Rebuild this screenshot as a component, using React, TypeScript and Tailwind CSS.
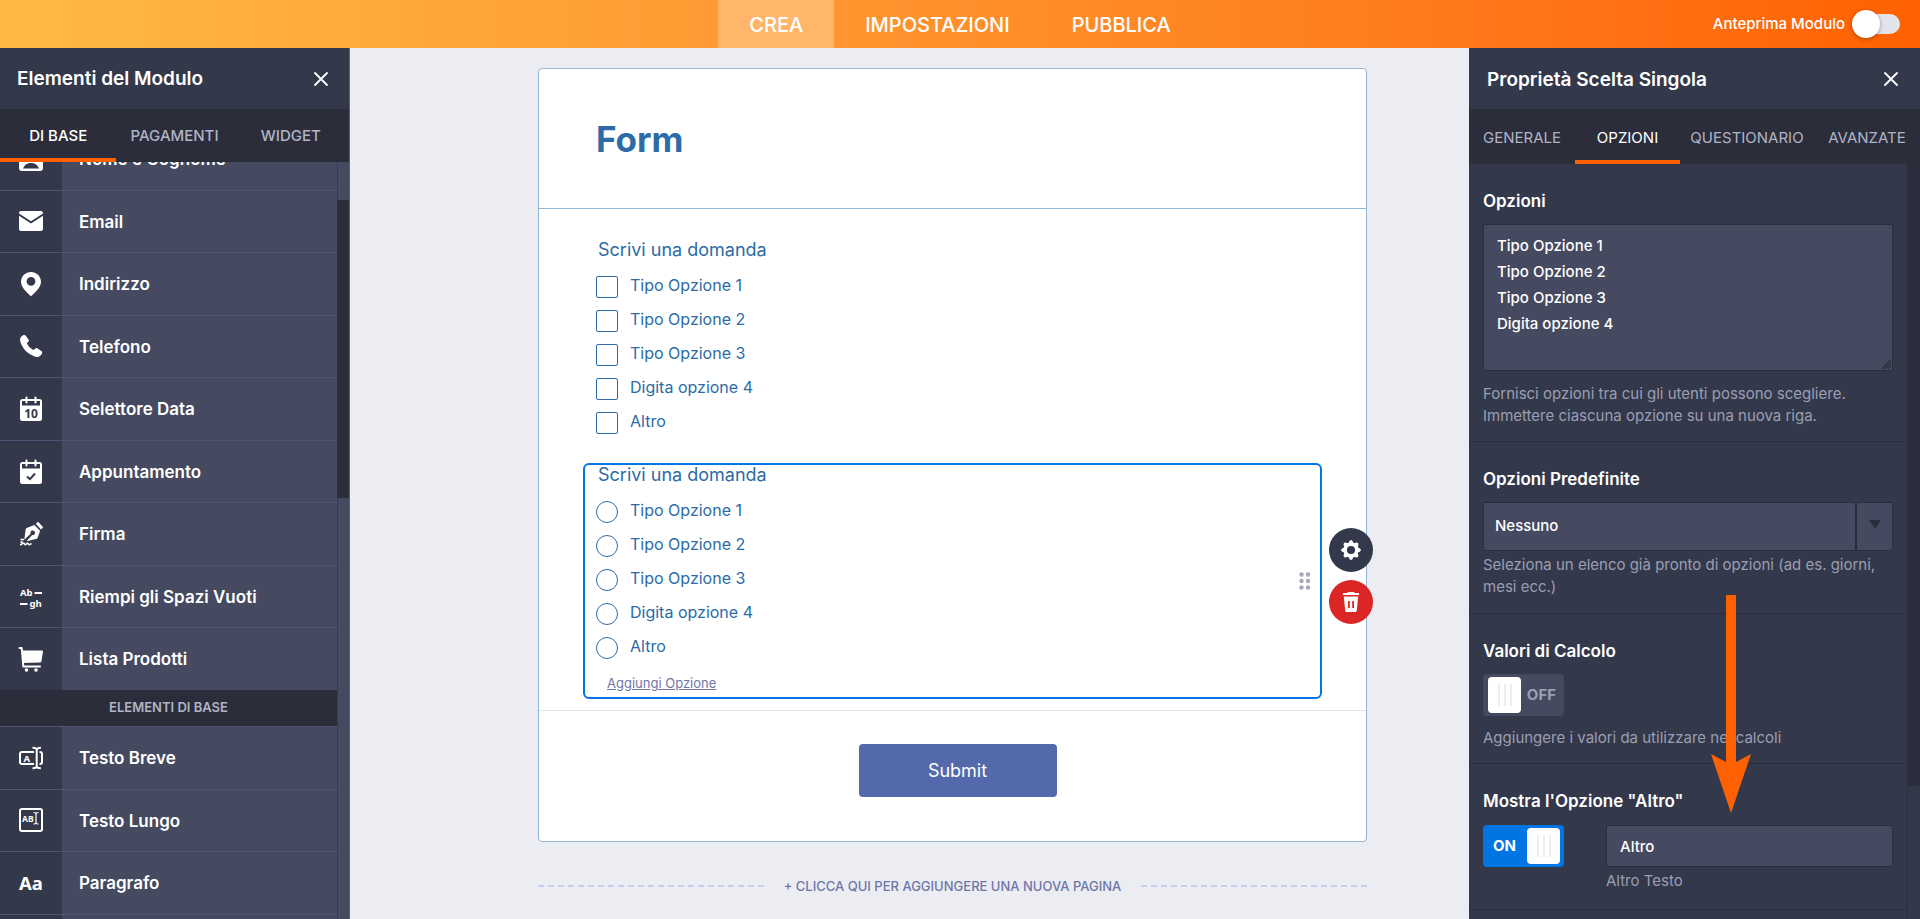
import type { ReactNode } from "react";

const glyphFont = "font-['Noto_Sans'] font-bold";

function IconBox({ children }: { children: ReactNode }) {
  return (
    <svg viewBox="0 0 26 26" className="h-[26px] w-[26px]" fill="none" aria-hidden="true">
      {children}
    </svg>
  );
}

const UserCardIcon = () => (
  <IconBox>
    <rect x="1" y="1" width="24" height="24" rx="3" fill="#fff" />
    <circle cx="13" cy="10" r="4" fill="#34384b" />
    <path d="M5 22.500c1.600-4 4.500-5.600 8-5.600s6.400 1.600 8 5.600z" fill="#34384b" />
  </IconBox>
);

const MailIcon = () => (
  <IconBox>
    <path
      d="M3 3h20a2 2 0 0 1 2 2v.4l-12 7.800L1 5.400V5a2 2 0 0 1 2-2zM1 7.700l12 7.900 12-7.900V21a2 2 0 0 1-2 2H3a2 2 0 0 1-2-2z"
      fill="#fff"
    />
  </IconBox>
);

const PinIcon = () => (
  <IconBox>
    <path
      fillRule="evenodd"
      d="M13 1C7.500 1 3 5.300 3 10.700 3 16.500 8.500 21 13 25.300 17.500 21 23 16.500 23 10.700 23 5.300 18.500 1 13 1zm0 13.700a4.400 4.400 0 1 1 0-8.800 4.400 4.400 0 0 1 0 8.800z"
      fill="#fff"
    />
  </IconBox>
);

const PhoneIcon = () => (
  <IconBox>
    <path
      d="M3.200 3.700 5 2.300c1-.7 2.100-.5 2.800.4l2.700 3.800c.6.900.4 2-.4 2.600l-1.200 1c.8 3 4 6 6.900 6.900l1.200-1.200c.7-.8 1.800-1 2.600-.3l3.800 2.600c.9.7 1.100 1.900.4 2.800l-1.500 1.800c-1.200 1.300-3 1.600-5 1C10 21.500 4.200 15.700 2.300 8.600c-.5-2-.4-3.700.9-4.900z"
      fill="#fff"
    />
  </IconBox>
);

const CalendarBase = () => (
  <>
    <path
      fillRule="evenodd"
      d="M4.500 3h17A2.500 2.500 0 0 1 24 5.500v17a2.500 2.500 0 0 1-2.500 2.500h-17A2.500 2.500 0 0 1 2 22.500v-17A2.500 2.500 0 0 1 4.500 3zM4 5v4.500h18V5z"
      fill="#fff"
    />
    <path d="M8.500 1.500v5M17.500 1.500v5" stroke="#fff" strokeWidth="2" strokeLinecap="round" />
  </>
);

const DateIcon = () => (
  <IconBox>
    <CalendarBase />
    <text x="13" y="21.500" textAnchor="middle" fontSize="12" fill="#34384b" className={glyphFont}>
      10
    </text>
  </IconBox>
);

const AppointmentIcon = () => (
  <IconBox>
    <CalendarBase />
    <path d="m9 17.500 3 2.700 5-5.700" stroke="#34384b" strokeWidth="2" />
  </IconBox>
);

const SignatureIcon = () => (
  <IconBox>
    <path d="m17.800 2.700 2.300-2 5 5.500-2 2.200z" fill="#fff" />
    <path
      fillRule="evenodd"
      d="m16.300 4 5.800 5.800-2.300 6.600c-.3.900-.9 1.500-1.800 1.700l-9.500 2.200 5.600-6.200a2.300 2.300 0 1 0-1.500-1.400L6.300 18.800 7.600 8.700c.1-1 .8-1.700 1.700-2z"
      fill="#fff"
    />
    <path d="M2.500 18.500H6M2.500 21.500l2-1M2 23.700c2-.2 2.500-1.700 3.500-1.700s.6 1.600 1.700 1.600 1.200-1.300 2.200-1.300.6 1.300 1.800 1.300 1.300-.8 2.300-1" stroke="#fff" strokeWidth="1.600" />
  </IconBox>
);

const BlanksIcon = () => (
  <IconBox>
    <text x="2" y="12" fontSize="9.500" fill="#fff" className={glyphFont}>
      Ab
    </text>
    <text x="11.500" y="22.500" fontSize="9.500" fill="#fff" className={glyphFont}>
      gh
    </text>
    <path d="M16.500 9h7.500M2 20h7.500" stroke="#fff" strokeWidth="1.800" />
  </IconBox>
);

const CartIcon = () => (
  <IconBox>
    <path d="M1.500 2h2.200l1.600 18.500h16.700" stroke="#fff" strokeWidth="2" strokeLinecap="round" strokeLinejoin="round" />
    <path d="M4 4.500h20a1 1 0 0 1 1 1l-1.500 9.500c-.2 1-.9 1.600-1.900 1.600l-16.600.4z" fill="#fff" />
    <circle cx="8.500" cy="24" r="1.800" fill="#fff" />
    <circle cx="18" cy="24" r="1.800" fill="#fff" />
  </IconBox>
);

const ShortTextIcon = () => (
  <IconBox>
    <path d="M16 7H4a2 2 0 0 0-2 2v8a2 2 0 0 0 2 2h12M21.500 7H22a2 2 0 0 1 2 2v8a2 2 0 0 1-2 2h-.5" stroke="#fff" strokeWidth="2" />
    <path d="M18.700 4.500v17M14.500 2.800c2.400 0 4.200.6 4.200 2.200 0-1.600 1.800-2.200 4.200-2.200M14.500 23.200c2.400 0 4.200-.6 4.200-2.200 0 1.600 1.800 2.200 4.200 2.200" stroke="#fff" strokeWidth="2" />
    <text x="5.500" y="16.500" fontSize="9.500" fill="#fff" className={glyphFont}>
      A
    </text>
  </IconBox>
);

const LongTextIcon = () => (
  <IconBox>
    <rect x="2" y="2" width="22" height="22" rx="2" stroke="#fff" strokeWidth="2" />
    <text x="4" y="14.500" fontSize="8.500" fill="#fff" className={glyphFont}>
      AB
    </text>
    <path d="M18 6.500v10M15.500 5.500c1.600 0 2.500.5 2.500 1.500 0-1 .9-1.500 2.500-1.500M15.500 17c1.600 0 2.500-.5 2.500-1.500 0 1 .9 1.500 2.500 1.500" stroke="#fff" strokeWidth="1.200" />
  </IconBox>
);

const ParagraphIcon = () => (
  <IconBox>
    <text x="13" y="20" textAnchor="middle" fontSize="18.500" fill="#fff" className={glyphFont}>
      Aa
    </text>
  </IconBox>
);

type Item = { name: string; icon: ReactNode };

const mainItems: Item[] = [
  { name: "Nome e Cognome", icon: <UserCardIcon /> },
  { name: "Email", icon: <MailIcon /> },
  { name: "Indirizzo", icon: <PinIcon /> },
  { name: "Telefono", icon: <PhoneIcon /> },
  { name: "Selettore Data", icon: <DateIcon /> },
  { name: "Appuntamento", icon: <AppointmentIcon /> },
  { name: "Firma", icon: <SignatureIcon /> },
  { name: "Riempi gli Spazi Vuoti", icon: <BlanksIcon /> },
  { name: "Lista Prodotti", icon: <CartIcon /> },
];

const baseItems: Item[] = [
  { name: "Testo Breve", icon: <ShortTextIcon /> },
  { name: "Testo Lungo", icon: <LongTextIcon /> },
  { name: "Paragrafo", icon: <ParagraphIcon /> },
];

function ElementRow({ item }: { item: Item }) {
  return (
    <li className="flex border-t border-[#4d5775]">
      <button type="button" className="flex flex-1 items-stretch text-left">
        <span className="flex w-[62px] items-center justify-center bg-[#34384b]">{item.icon}</span>
        <span className="flex flex-1 items-center bg-[#454a60] pt-0.5 pl-[17px] text-[17px] font-semibold text-white">
          {item.name}
        </span>
      </button>
    </li>
  );
}

function CloseButton() {
  return (
    <button type="button" aria-label="Chiudi" className="flex h-6 w-6 items-center justify-center">
      <svg viewBox="0 0 16 16" className="h-4 w-4" stroke="#fff" strokeWidth="1.800" strokeLinecap="round" aria-hidden="true">
        <path d="M2 2l12 12M14 2 2 14" />
      </svg>
    </button>
  );
}

function TopBar() {
  return (
    <header className="grid h-12 shrink-0 grid-cols-[1fr_auto_1fr] bg-linear-to-r from-[#ffb945] to-[#ff6100] text-white">
      <nav className="col-start-2 flex text-[20px] font-medium">
        <a href="#crea" className="flex items-center bg-[#ffb56a] px-[31px] pt-0.5">CREA</a>
        <a href="#impostazioni" className="flex items-center px-[31px] pt-0.5">IMPOSTAZIONI</a>
        <a href="#pubblica" className="flex items-center px-[31px] pt-0.5">PUBBLICA</a>
      </nav>
      <label className="flex items-center justify-end gap-[7px] pr-5 text-[15px] font-medium">
        Anteprima Modulo
        <input type="checkbox" role="switch" className="peer sr-only" />
        <span className="flex h-7 w-12 items-center">
          <span className="z-10 h-7 w-7 shrink-0 rounded-full bg-white shadow-[0_1px_4px_rgba(0,0,0,0.35)]" />
          <span className="-ml-5 h-5 w-10 rounded-full bg-[#e3e5ea]" />
        </span>
      </label>
    </header>
  );
}

function ElementsPanel() {
  return (
    <aside className="flex w-[350px] shrink-0 flex-col border-r border-[#5d617c] bg-[#34384b]">
      <div className="flex h-[61px] shrink-0 items-center justify-between pr-4 pl-[17px]">
        <h2 className="pt-0.5 text-[19px] font-semibold text-white">Elementi del Modulo</h2>
        <CloseButton />
      </div>
      <div role="tablist" className="grid h-[53px] shrink-0 grid-cols-3 bg-[#2b2d3b] text-[15px] font-medium text-[#b0b4c5]">
        <button type="button" role="tab" aria-selected="true" className="border-b-4 border-[#ff6100] pt-1.5 text-white">
          DI BASE
        </button>
        <button type="button" role="tab" aria-selected="false" className="pt-0.5">PAGAMENTI</button>
        <button type="button" role="tab" aria-selected="false" className="pt-0.5">WIDGET</button>
      </div>
      <div className="flex min-h-0 flex-1 overflow-hidden">
        <div className="flex-1">
          <ul className="-mt-[35px] grid h-[563px] auto-rows-fr">
            {mainItems.map((item) => (
              <ElementRow key={item.name} item={item} />
            ))}
          </ul>
          <h3 className="flex h-9 items-center justify-center bg-[#2b2d3b] text-[13px] font-semibold text-[#b0b4c5]">
            ELEMENTI DI BASE
          </h3>
          <ul className="grid h-[250px] auto-rows-fr">
            {baseItems.map((item) => (
              <ElementRow key={item.name} item={item} />
            ))}
            <li className="flex border-t border-[#4d5775]">
              <span className="w-[62px] bg-[#34384b]" />
              <span className="flex-1 bg-[#454a60]" />
            </li>
          </ul>
        </div>
        <div className="w-3 border-l border-[#373b4e] bg-[#454a60] pt-[38px]">
          <div className="-ml-px h-[298px] bg-[#2b2d3b]" />
        </div>
      </div>
    </aside>
  );
}

const choices = ["Tipo Opzione 1", "Tipo Opzione 2", "Tipo Opzione 3", "Digita opzione 4", "Altro"];

function Question({ kind }: { kind: "checkbox" | "radio" }) {
  return (
    <fieldset className="min-w-0">
      <legend className="mb-[10px] pl-[13px] text-[18px] leading-5">Scrivi una domanda</legend>
      {choices.map((choice) => (
        <label key={choice} className="flex h-[34px] items-center gap-3 pl-[11px]">
          <input
            type={kind}
            name={kind}
            className={
              kind === "radio"
                ? "h-[22px] w-[22px] appearance-none rounded-full border border-[#2c6ba5] bg-white"
                : "h-[22px] w-[22px] appearance-none rounded-xs border border-[#2c6ba5] bg-white"
            }
          />
          <span className="pb-1 text-[16px] leading-6">{choice}</span>
        </label>
      ))}
    </fieldset>
  );
}

const gearTeeth = [0, 45, 90, 135, 180, 225, 270, 315];

function GearIcon() {
  return (
    <svg viewBox="-10 -10 20 20" className="h-5 w-5" fill="#fff" aria-hidden="true">
      {gearTeeth.map((angle) => (
        <path key={angle} transform={`rotate(${angle})`} d="M-3.200-6-1.300-9.200Q0-10.600 1.300-9.200L3.200-6z" />
      ))}
      <path fillRule="evenodd" d="M0-7.300a7.300 7.300 0 1 1 0 14.600A7.300 7.300 0 0 1 0-7.300zm0 3.200a4.100 4.100 0 1 0 0 8.200 4.100 4.100 0 0 0 0-8.200z" />
    </svg>
  );
}

function FormCanvas() {
  return (
    <main className="min-w-0 flex-1 overflow-hidden pt-5 pr-[102px] pl-[188px] font-[Inter,sans-serif]">
      <form className="rounded-sm border border-[#93b7d5] bg-white text-[#2c6ba5]" onSubmit={(e) => e.preventDefault()}>
        <div className="border-b border-[#93b7d5] px-[57px] pt-[50px] pb-[49px]">
          <h1 className="text-[35px] leading-10 font-bold">Form</h1>
        </div>
        <div className="flex flex-col gap-[21px] px-11 pt-[29px] pb-[11px]">
          <div className="border-2 border-transparent">
            <Question kind="checkbox" />
          </div>
          <div className="relative rounded-md border-2 border-[#0075e3] pb-1">
            <Question kind="radio" />
            <button type="button" className="mt-2 ml-[22px] block text-[13px] leading-5 text-[#6f76a7] underline">
              Aggiungi Opzione
            </button>
            <svg viewBox="0 0 12 18" className="absolute top-[107px] right-[9px] h-[18px] w-3" fill="#a5aabd" aria-hidden="true">
              <circle cx="2.500" cy="2.500" r="2.200" />
              <circle cx="9" cy="2.500" r="2.200" />
              <circle cx="2.500" cy="9" r="2.200" />
              <circle cx="9" cy="9" r="2.200" />
              <circle cx="2.500" cy="15.500" r="2.200" />
              <circle cx="9" cy="15.500" r="2.200" />
            </svg>
            <div className="absolute top-[63px] -right-[53px] flex flex-col gap-2">
              <button type="button" aria-label="Proprietà" className="flex h-11 w-11 items-center justify-center rounded-full bg-[#34384b]">
                <GearIcon />
              </button>
              <button type="button" aria-label="Elimina" className="flex h-11 w-11 items-center justify-center rounded-full bg-[#dc2626]">
                <svg viewBox="0 0 18 20" className="h-5 w-[18px]" aria-hidden="true">
                  <path
                    fillRule="evenodd"
                    fill="#fff"
                    d="M6 0h6l.7 1H16a1.200 1.200 0 0 1 1.200 1.200V3H.8v-.8A1.200 1.200 0 0 1 2 1h3.300zM1.800 4.500h14.400l-1.400 14c-.1.900-.7 1.500-1.600 1.500H4.800c-.9 0-1.500-.6-1.600-1.500zM6 9v7h1.800V9zm4.200 0v7H12V9z"
                  />
                </svg>
              </button>
            </div>
          </div>
        </div>
        <div className="flex justify-center border-t border-[#e3e5ee] pt-[33px] pb-11 pl-[10px]">
          <button type="submit" className="h-[53px] w-[198px] rounded-sm bg-[#5369ac] text-[18px] text-white">
            Submit
          </button>
        </div>
      </form>
      <button
        type="button"
        className="mt-[34px] flex w-full items-center gap-5 text-[13px] leading-5 font-medium whitespace-nowrap text-[#6f76a7]"
      >
        <span className="h-0.5 flex-1 bg-[repeating-linear-gradient(90deg,#c8ceed_0_6px,transparent_6px_10px)]" />
        + CLICCA QUI PER AGGIUNGERE UNA NUOVA PAGINA
        <span className="h-0.5 flex-1 bg-[repeating-linear-gradient(90deg,#c8ceed_0_6px,transparent_6px_10px)]" />
      </button>
    </main>
  );
}

function Grip() {
  return (
    <span className="flex h-9 w-[33px] items-center justify-center gap-1 rounded-sm bg-white">
      <span className="h-[22px] w-0.5 bg-[#eeeeee]" />
      <span className="h-[22px] w-0.5 bg-[#eeeeee]" />
      <span className="h-[22px] w-0.5 bg-[#eeeeee]" />
    </span>
  );
}

function Switch({ id, on }: { id: string; on: boolean }) {
  return (
    <label
      htmlFor={id}
      className={
        on
          ? "flex h-[42px] w-[81px] items-center justify-between rounded-sm bg-[#0075e3] pr-1 pl-[10px] text-[15px] font-bold text-white"
          : "flex h-[42px] w-[81px] items-center justify-between rounded-sm bg-[#454a60] pr-2 pl-[5px] text-[15px] font-bold text-[#9a9fb3]"
      }
    >
      <input id={id} type="checkbox" role="switch" defaultChecked={on} className="sr-only" />
      {on ? "ON" : <Grip />}
      {on ? <Grip /> : "OFF"}
    </label>
  );
}

const sectionClass = "border-b border-[#2b2d3b] pt-[25px] pr-[14px] pl-[14px]";
const headingClass = "mb-[11px] block text-[17px] leading-6 font-semibold text-white";
const helpClass = "text-[15px] leading-[22px] text-[#9a9fb3]";

function PropertiesPanel() {
  return (
    <aside className="relative flex w-[451px] shrink-0 flex-col bg-[#34384b]">
      <div className="flex h-[61px] shrink-0 items-center justify-between pr-[17px] pl-[18px]">
        <h2 className="pt-1 text-[19px] font-semibold text-white">Proprietà Scelta Singola</h2>
        <CloseButton />
      </div>
      <div role="tablist" className="flex h-[55px] shrink-0 bg-[#2b2d3b] text-[15px] text-[#b0b4c5]">
        <button type="button" role="tab" aria-selected="false" className="w-[106px] pt-1">GENERALE</button>
        <button type="button" role="tab" aria-selected="true" className="w-[105px] border-b-4 border-[#ff6100] pt-2 text-white">
          OPZIONI
        </button>
        <button type="button" role="tab" aria-selected="false" className="w-[134px] pt-1">QUESTIONARIO</button>
        <button type="button" role="tab" aria-selected="false" className="w-[106px] pt-1">AVANZATE</button>
      </div>
      <div className="flex min-h-0 flex-1 overflow-hidden">
        <div className="min-w-0 flex-1">
          <section className={`${sectionClass} pb-[14px]`}>
            <label htmlFor="options" className={headingClass}>Opzioni</label>
            <div className="relative">
              <textarea
                id="options"
                defaultValue={"Tipo Opzione 1\nTipo Opzione 2\nTipo Opzione 3\nDigita opzione 4"}
                className="block h-[147px] w-full resize-none rounded-xs border border-[#2b2d3b] bg-[#454a60] px-[13px] py-2 text-[15px] leading-[26px] font-medium text-white"
              />
              <svg viewBox="0 0 9 9" className="absolute right-0.5 bottom-0.5 h-[9px] w-[9px]" stroke="#2b2d3b" strokeWidth="1.300" aria-hidden="true">
                <path d="M0 9 9 0M3 9l6-6M6 9l3-3" />
              </svg>
            </div>
            <p className={`${helpClass} mt-3`}>
              Fornisci opzioni tra cui gli utenti possono scegliere. Immettere ciascuna opzione su una nuova riga.
            </p>
          </section>
          <section className={`${sectionClass} pb-[15px]`}>
            <label htmlFor="preset" className={headingClass}>Opzioni Predefinite</label>
            <div className="grid rounded-xs border border-[#2b2d3b] bg-[#454a60]">
              <select
                id="preset"
                className="col-start-1 row-start-1 h-[47px] w-full appearance-none bg-transparent px-[11px] text-[15px] font-medium text-white"
              >
                <option>Nessuno</option>
              </select>
              <span className="pointer-events-none col-start-1 row-start-1 flex w-[37px] items-center justify-center justify-self-end border-l-2 border-[#2b2d3b]">
                <svg viewBox="0 0 12 9" className="mb-1 h-[9px] w-3" fill="#2b2d3b" aria-hidden="true">
                  <path d="M0 0h12L6 9z" />
                </svg>
              </span>
            </div>
            <p className={`${helpClass} mt-[3px]`}>
              Seleziona un elenco già pronto di opzioni (ad es. giorni, mesi ecc.)
            </p>
          </section>
          <section className={`${sectionClass} pb-[14px]`}>
            <h3 className={headingClass}>Valori di Calcolo</h3>
            <Switch id="calc" on={false} />
            <p className={`${helpClass} mt-[11px]`}>Aggiungere i valori da utilizzare nei calcoli</p>
          </section>
          <section className={`${sectionClass} pb-[17px]`}>
            <h3 className={headingClass}>Mostra l'Opzione "Altro"</h3>
            <div className="flex gap-[42px] pt-px">
              <Switch id="other" on />
              <div className="min-w-0 flex-1">
                <input
                  id="other-text"
                  defaultValue="Altro"
                  className="block h-[42px] w-full rounded-xs border border-[#2b2d3b] bg-[#454a60] px-[13px] text-[15px] font-medium text-white"
                />
                <label htmlFor="other-text" className={`${helpClass} mt-[3px] block`}>Altro Testo</label>
              </div>
            </div>
          </section>
        </div>
        <div className="w-[13px] border-l border-[#2b2d3b]">
          <div className="-ml-px h-[622px] bg-[#2b2d3b]" />
        </div>
      </div>
      <svg viewBox="0 0 40 218" className="pointer-events-none absolute top-[547px] left-[242px] h-[218px] w-10" aria-hidden="true">
        <path d="M15 0h10v167l15-8-20 59L0 159l15 8z" fill="#ff6100" />
      </svg>
    </aside>
  );
}

export default function App() {
  return (
    <div className="flex h-screen flex-col overflow-hidden bg-[#ecedf2] font-[Inter,sans-serif]">
      <TopBar />
      <div className="flex min-h-0 flex-1">
        <ElementsPanel />
        <FormCanvas />
        <PropertiesPanel />
      </div>
    </div>
  );
}
